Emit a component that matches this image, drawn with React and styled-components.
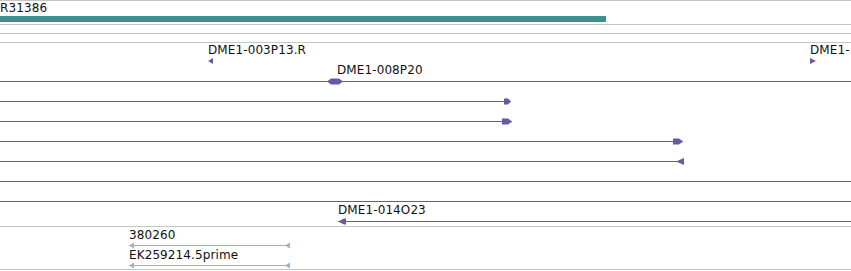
import styled, { createGlobalStyle } from "styled-components";

const PURPLE = "#6c56a6";
const TEAL = "#3f8f8f";
const BLUE = "#88b9da";
const GRAY = "#c6c6c6";

const GlobalStyle = createGlobalStyle`
    html, body {
        margin: 0;
        padding: 0;
        background: #fff;
        overflow: hidden;
    }
    body {
        font-family: "DejaVu Sans", "Liberation Sans", sans-serif;
    }
`;

const Panel = styled.div`
    width: 851px;
    height: 271px;
    overflow: hidden;
    display: flex;
    flex-direction: column;
`;

const Rule = styled.div`
    height: 1px;
    flex: none;
    background: ${GRAY};
`;

const Spacer = styled.div`
    height: ${(p) => p.$h}px;
    flex: none;
`;

const Track = styled.div`
    display: flex;
    flex-direction: column;
    flex: none;
    padding-bottom: ${(p) => p.$pad || 0}px;
`;

// one feature row: a strip for names, a strip for the glyphs
const Row = styled.div`
    display: grid;
    grid-template-rows: ${(p) => p.$labelH || 15}px ${(p) => p.$glyphH || 5}px;
`;

const Strip = styled.div`
    position: relative;
`;

const Label = styled.span`
    position: absolute;
    top: ${(p) => p.$top || 0}px;
    font-size: 12px;
    line-height: 14px;
    letter-spacing: 0.1px;
    color: #111;
    white-space: nowrap;
`;

const CoverageBar = styled.div`
    height: 6px;
    background: ${TEAL};
`;

const GlyphSvg = styled.svg`
    position: absolute;
    top: 0;
    height: 7px;
    overflow: visible;
    display: block;
`;

// feature glyph: a thin line with optional heads at each end
function Glyph({ from, to, color, left, right, lozenge }) {
    const w = to - from;
    return (
        <GlyphSvg style={{ left: from, width: w }} viewBox={`0 0 ${w} 7`}>
            <rect x="0" y="3" width={w} height="1" fill={color} />
            {left === "left" && <polygon points="0,3.5 6,0.5 8,0.5 8,6.5 6,6.5" fill={color} />}
            {left === "tip" && <polygon points="0,3.5 5,0.5 5,6.5" fill={color} />}
            {right === "right" && (
                <polygon points={`${w - 10},0.5 ${w - 4},0.5 ${w},3.5 ${w - 4},6.5 ${w - 10},6.5`} fill={color} />
            )}
            {right === "rtip" && <polygon points={`${w - 7},0.5 ${w - 3},0.5 ${w},3.5 ${w - 3},6.5 ${w - 7},6.5`} fill={color} />}
            {right === "back" && <polygon points={`${w - 8},3.5 ${w},0 ${w},7`} fill={color} />}
            {right === "wedge" && <polygon points={`${w - 5},3.5 ${w},0.5 ${w},6.5`} fill={color} />}
            {lozenge && (
                <polygon
                    points={`${lozenge - 8},3.5 ${lozenge - 4},0.5 ${lozenge + 4},0.5 ${lozenge + 8},3.5 ${lozenge + 4},6.5 ${lozenge - 4},6.5`}
                    fill={color}
                />
            )}
        </GlyphSvg>
    );
}

// tiny arrow with no connecting line
function BareHead({ from, to, left }) {
    const w = to - from;
    const pts = left ? `0,3 ${w},0 ${w},6` : `0,0 ${w},3 0,6`;
    return (
        <GlyphSvg style={{ left: from, width: w }} viewBox={`0 0 ${w} 7`}>
            <polygon points={pts} fill={PURPLE} />
        </GlyphSvg>
    );
}

const cloneRows = [
    {
        labels: [
            { x: 208, text: "DME1-003P13.R" },
            { x: 810, text: "DME1-" },
        ],
        glyphs: [
            { from: 208, to: 213, left: "tip" },
            { from: 810, to: 816, right: "rtip" },
        ],
        bare: true,
    },
    {
        labels: [{ x: 337, text: "DME1-008P20" }],
        glyphs: [{ from: 0, to: 851, lozenge: 335 }],
    },
    { labels: [], glyphs: [{ from: 0, to: 511, right: "rtip" }] },
    { labels: [], glyphs: [{ from: 0, to: 512, right: "right" }] },
    { labels: [], glyphs: [{ from: 0, to: 683, right: "right" }] },
    { labels: [], glyphs: [{ from: 0, to: 684, right: "back" }] },
    { labels: [], glyphs: [{ from: 0, to: 851 }] },
    { labels: [], glyphs: [{ from: 0, to: 851 }] },
    {
        labels: [{ x: 338, text: "DME1-014O23" }],
        glyphs: [{ from: 338, to: 851, left: "left" }],
    },
];

const estRows = [
    { label: "380260", from: 129, to: 290 },
    { label: "EK259214.5prime", from: 129, to: 290 },
];

export default function App() {
    return (
        <Panel>
            <GlobalStyle />
            <Rule />
            <Track $pad={1}>
                <Row $labelH={15} $glyphH={7}>
                    <Strip>
                        <Label>R31386</Label>
                    </Strip>
                    <CoverageBar style={{ width: 606 }} />
                </Row>
            </Track>
            <Rule />
            <Spacer $h={8} />
            <Rule />
            <Spacer $h={8} />
            <Rule />

            <Track $pad={3}>
                {cloneRows.map((row, i) => (
                    <Row key={i}>
                        <Strip>
                            {row.labels.map((l) => (
                                <Label key={l.text} style={{ left: l.x }}>{l.text}</Label>
                            ))}
                        </Strip>
                        <Strip>
                            {row.glyphs.map((g, j) =>
                                row.bare ? (
                                    <BareHead key={j} {...g} />
                                ) : (
                                    <Glyph key={j} color={PURPLE} {...g} />
                                )
                            )}
                        </Strip>
                    </Row>
                ))}
            </Track>
            <Rule />

            <Track $pad={2}>
                {estRows.map((r) => (
                    <Row key={r.label}>
                        <Strip>
                            <Label $top={1} style={{ left: r.from }}>{r.label}</Label>
                        </Strip>
                        <Strip>
                            <Glyph color={BLUE} from={r.from} to={r.to} left="tip" right="wedge" />
                        </Strip>
                    </Row>
                ))}
            </Track>
            <Rule />
        </Panel>
    );
}
